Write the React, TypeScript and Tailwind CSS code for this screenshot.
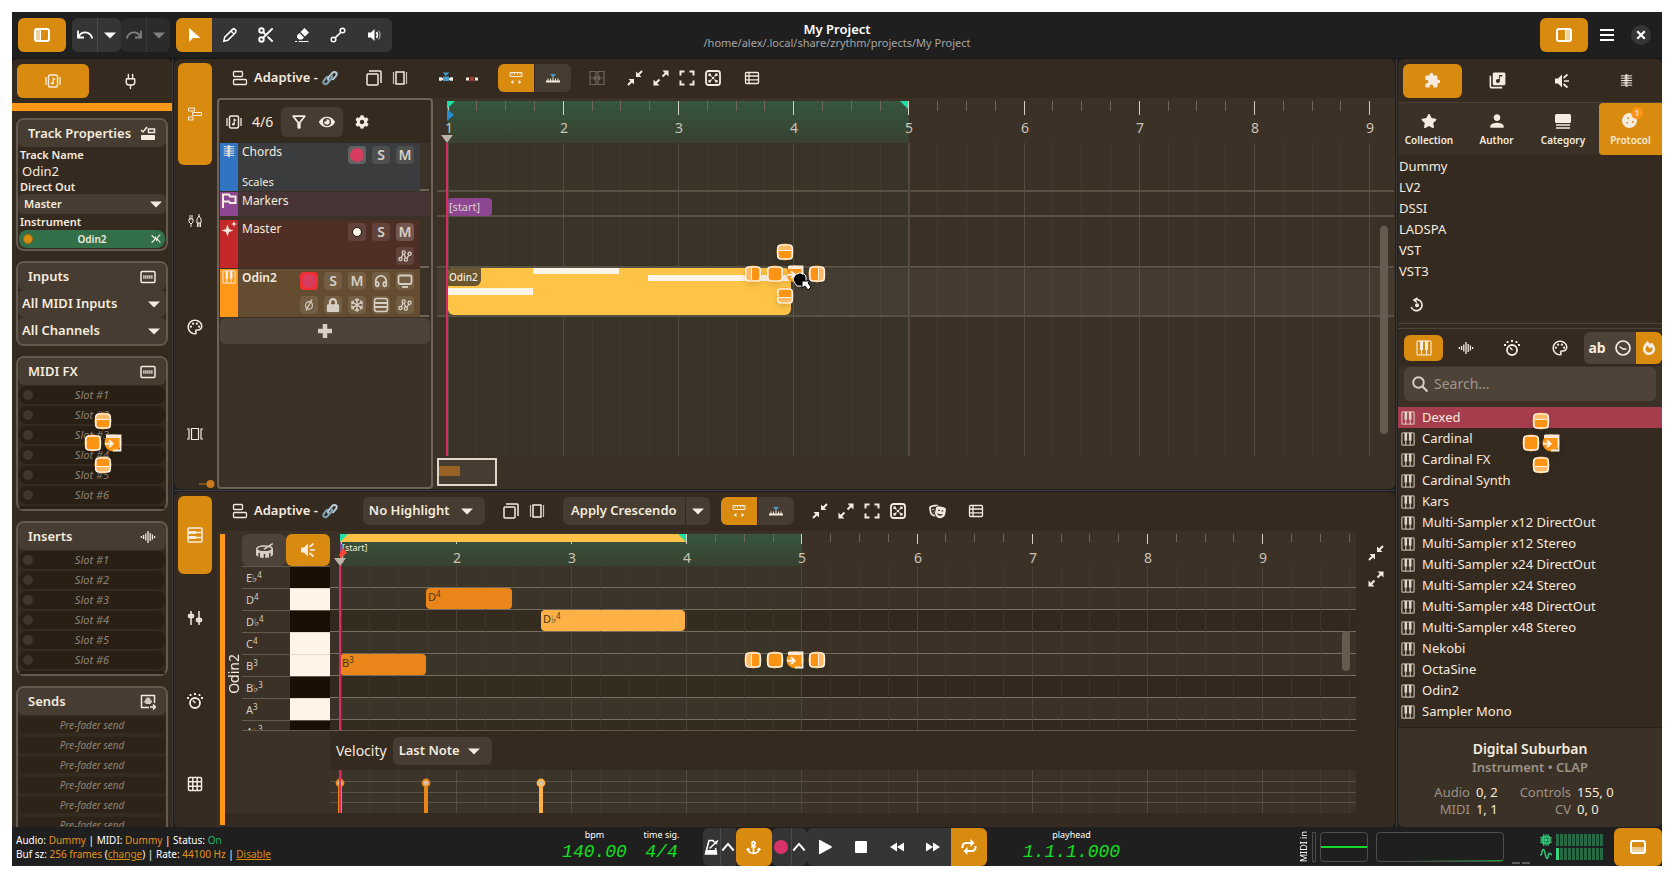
import React from "react";
import {
  FaAnchor, FaLock, FaRegSnowflake, FaTheaterMasks, FaDrum, FaCookie, FaFireAlt, FaStar, FaCog, FaEye,
} from "react-icons/fa";
import { MdLibraryMusic, MdOutlinePalette, MdOutlineFilterAlt, MdPerson, MdExtension } from "react-icons/md";
import { Headphones, Scissors, Plug } from "lucide-react";

type P = { className?: string; size?: number };

const S = ({ size = 16, className = "", children }: P & { children: React.ReactNode }) => (
  <svg width={size} height={size} viewBox="0 0 16 16" fill="none" stroke="currentColor" strokeWidth="1.5" className={"shrink-0 " + className} aria-hidden="true">
    {children}
  </svg>
);

const PanelLeft = () => (
  <S><rect x="1" y="2" width="14" height="12" rx="2" strokeWidth="2" /><path d="M2 3h4v10H2z" fill="currentColor" fillOpacity=".6" stroke="none" /><path d="M6.5 2v12" strokeWidth="1" /></S>
);
const PanelRight = () => (
  <S><rect x="1" y="2" width="14" height="12" rx="2" strokeWidth="2" /><path d="M10 3h4v10h-4z" fill="currentColor" fillOpacity=".6" stroke="none" /><path d="M9.5 2v12" strokeWidth="1" /></S>
);
const PanelBottom = () => (
  <S><rect x="1" y="2" width="14" height="12" rx="2" strokeWidth="2" /><path d="M2 10h12v3H2z" fill="currentColor" fillOpacity=".6" stroke="none" /><path d="M1 9h14" strokeWidth="1" /></S>
);
const Undo = () => <S><path d="M1 3.5v7h6M1.5 10C4 4 13 3 15.300 11.500" strokeWidth="1.800" /></S>;
const Redo = () => <S><path d="M15 3.500v7H9M14.500 10C12 4 3 3 .700 11.500" strokeWidth="1.800" /></S>;
const Down = ({ className }: P) => <S size={12} className={className}><path d="M0 4.500h16l-8 8z" fill="currentColor" stroke="none" /></S>;
const Up = () => <S size={14}><path d="M1.500 12 8 4.500 14.500 12" strokeWidth="2.200" /></S>;
const Pointer = () => <S><path d="M3 1v14l4-4h7.500z" fill="currentColor" stroke="none" /></S>;
const Pencil = () => <S><path d="M1.800 14.200l.9-4L10.500 2.400c1.800-1.500 4.600 1 3.100 3.100L5.800 13.300zM9 4l3 3" /></S>;
const Eraser = () => <S><path d="M10.500 1 15 5.500 11 9.500 6.500 5zM5.500 6 10 10.500 8 12.500H5L3 10.500V8.500z" fill="currentColor" stroke="none" /><path d="M1 14.500h2M4.500 14.500h10" strokeWidth="1.200" /></S>;
const Ramp = () => <S><circle cx="3.500" cy="12.500" r="2.300" /><circle cx="12.500" cy="3.500" r="2.300" /><path d="M5 11.500C7 8 9 8 11 5" /></S>;
const Audition = () => <S><path d="M2 5.500h3L8.500 2v12L5 10.500H2z" fill="currentColor" stroke="none" /><path d="M10.500 5c1.300 2 1.300 4 0 6" /><path d="M12.500 3.500c2 3 2 6 0 9" strokeWidth="1" opacity=".7" /></S>;
const Listen = () => <S><path d="M1 5.500h3L8 1.500v13L4 10.500H1z" fill="currentColor" stroke="none" /><path d="M10 8h5M9.500 5l4-3.500M9.500 11l4 3.500" strokeWidth="1.700" /></S>;
const TrackIcon = () => <S><rect x="3.500" y="2" width="9" height="12" rx="1.500" /><path d="M1 4v8M15 4v8" strokeWidth="1.300" /><path d="M8.200 10.500V5.200l2 1.200" strokeWidth="1.200" /><circle cx="7.300" cy="10.300" r="1.200" fill="currentColor" stroke="none" /></S>;
const CheckBoxes = () => <S><path d="M1 4l2 2 4-5" /><rect x="8.500" y="3" width="6" height="3.500" /><rect x="1" y="9" width="14" height="5" rx="1" fill="currentColor" stroke="none" /></S>;
const MidiIcon = () => <S><rect x="1" y="2.500" width="14" height="11" rx="1.200" /><path d="M3 8h10" strokeWidth="3.500" opacity=".7" strokeDasharray="1.700 .3" /></S>;
const Wave = () => <S><path d="M1.400 7v2M3.600 6v4M5.800 4.500v7M8 2v12M10.200 4v8M12.400 5.500v5M14.600 7v2" strokeWidth="1.300" /></S>;
const SendIcon = () => <S><path d="M9 13.500H1.500v-12h13V9" /><path d="M3.500 7.500h1v-1h1v-2h1v-1h3v1h1v2h1.500v2H11v1.500H5.500V8.500h-2z" fill="currentColor" stroke="none" opacity=".8" /><path d="M10 13h5m-2-2.500 2.500 2.500-2.500 2.500" /></S>;
const Piano = ({ size, className }: P) => (
  <S size={size} className={className}><rect x="1" y="1" width="14" height="14" rx="1" strokeOpacity=".75" /><path d="M5.500 10v5M10.500 10v5" strokeWidth="1.200" /><path d="M5.500 1v9M10.500 1v9" strokeWidth="3" /></S>
);
const PianoRoll = () => <S><rect x="1" y="1" width="14" height="14" rx="1" /><path d="M1 5.500h14M1 10.500h14" /><path d="M2 5.500h7M2 10.500h7" strokeWidth="3" /></S>;
const ChordIcon = ({ size }: P) => <S size={size}><path d="M2 3h12M2 5.500h12M2 8h12M2 10.500h12M2 13h12" strokeWidth="1" /><path d="M8 1v14M6 4.500h4.500M5.500 8h5M6 11.500h4" strokeWidth="2" strokeDasharray="3 1" opacity=".85" /></S>;
const Steps = () => <S><path d="M1.500 2h6v3h-6zM5.500 6.500h9v3h-9zM1.500 11h4.500v3H1.500z" strokeWidth="1" /></S>;
const Cables = () => <S><path d="M2 6h4v3L4 11 2 9zM4 11v3M3 2v4M5 2v4M10 10h4V6l-2-3-2 3zM12 1v3M12 10v4M10.500 14V10M13.500 14V10" strokeWidth="1" /></S>;
const Events = () => <S><path d="M4.500 2.500h7v11h-7zM0 3h2v10H0M16 3h-2v10h2" strokeWidth="1.200" /></S>;
const Faders = () => <S><path d="M4 1v14M12 1v14" /><rect x="1.500" y="4.500" width="5" height="3" rx="1.200" fill="currentColor" fillOpacity=".6" /><rect x="9.500" y="8.500" width="5" height="3" rx="1.200" fill="currentColor" fillOpacity=".6" /></S>;
const Knob = () => <S><circle cx="8" cy="10" r="5" strokeWidth="1.800" /><path d="M5.800 7.500 8.500 10" /><path d="M3.500 1v2M7 1h2M12.500 1v2M0 5h2M14 5h2" strokeWidth="1.800" /></S>;
const GridIcon = () => <S><rect x="1.500" y="1.500" width="13" height="13" rx="1" /><path d="M5.800 1.500v13M10.200 1.500v13M1.500 5.800h13M1.500 10.200h13" /></S>;
const Snap = () => <S><rect x="1.500" y="1.500" width="9" height="5" rx="1" strokeWidth="1.300" /><rect x="1.500" y="9.500" width="13" height="5" rx="1" strokeWidth="1.300" /></S>;
const Duplicate = () => <S><rect x="1" y="4" width="11" height="11" rx="1" /><path d="M3 1h11a1 1 0 0 1 1 1v11" /></S>;
const Overlap = () => <S><rect x="4" y="2" width="8" height="12" /><path d="M1.500 2v12M14.500 2v12" strokeWidth="1.200" opacity=".8" /></S>;
const LinkIcon = () => (
  <svg width="16" height="16" viewBox="0 0 16 16" fill="none" strokeLinecap="round" strokeWidth="2" aria-hidden="true">
    <path d="M7 10.500c-1.400-.4-1.400-2-.5-3l4-4.700c1-1 2.600-1.200 3.500-.3s.9 2.200 0 3.300L11 9.300" stroke="#b9cfd8" />
    <path d="M9 5.500c1.300.5 1.300 2 .4 3l-4 4.800c-1 1-2.600 1.200-3.400.3s-.9-2.200 0-3.300L5 6.700" stroke="#7fa5b5" />
  </svg>
);
const Merge = () => <S><path d="M1 9h3M12 9h3" strokeWidth="3.500" /><path d="M4 9h8" strokeWidth="2" /><rect x="5" y="6.500" width="6" height="4.500" fill="#4c9cc9" stroke="none" /><path d="M4.500 2.500h7L8 6z" fill="#4c9cc9" stroke="none" /></S>;
const Cut = () => <S><path d="M2 9h3M11 9h3" strokeWidth="3" /><path d="M6 7l4 4M10 7l-4 4" stroke="#c8403c" strokeWidth="1.500" /></S>;
const RulerIcon = () => <S><path d="M2 6.500V2.500h12v4z" strokeWidth="1" /><path d="M4 2.500v2M6.500 2.500v2M9.500 2.500v2M12 2.500v2" strokeWidth="1" /><path d="M5.500 10v4L2.500 12zM10.500 10v4l3-2z" fill="currentColor" stroke="none" /></S>;
const SnapRuler = () => <S><path d="M5 4h6L8 7.500z" fill="#4c9cc9" stroke="none" /><path d="M1 11.500h14" strokeWidth="2" /><path d="M3 8.500V11M5.500 8.500V11M8 7.500V11M10.500 8.500V11M13 8.500V11" strokeWidth="1" /></S>;
const BounceIcon = () => <S><path d="M1 1.500h6v13H1zM9 1.500h6v13H9z" strokeWidth="1.200" /><path d="M2 8h5M9 8h5M5 6l2 2-2 2M11 6L9 8l2 2" strokeWidth="1.200" /></S>;
const ZoomOut = () => <S><path d="M9 1.500v5.500h5.500zM1.500 9H7v5.500z" fill="currentColor" stroke="none" /><path d="M10 6l5-5M6 10l-5 5" strokeWidth="2" /></S>;
const ZoomIn = () => <S><path d="M9.500.5h6v6zM.5 9.500v6h6z" fill="currentColor" stroke="none" /><path d="M9.500 6.500l4-4M6.500 9.500l-4 4" strokeWidth="2" /></S>;
const Fit = () => <S><path d="M1.500 5.500V1.500h4M10.500 1.500h4v4M14.500 10.500v4h-4M5.500 14.500h-4v-4" strokeWidth="2" /></S>;
const FitBox = () => <S><rect x="1" y="1" width="14" height="14" rx="2.500" strokeWidth="1.800" /><path d="M4 4l2.500 2.500M12 4 9.500 6.500M4 12l2.500-2.500M12 12 9.500 9.500M4 6V4h2M10 4h2v2M12 10v2h-2M6 12H4v-2" strokeWidth="1.200" /><circle cx="8" cy="8" r="1.300" fill="currentColor" stroke="none" /></S>;
const TableIcon = () => <S><rect x="1.500" y="2.500" width="13" height="11" rx="1" strokeWidth="1.300" /><path d="M5 2.500v11M1.500 6h13M1.500 9.800h13" strokeWidth="1.300" /></S>;
const Flag = () => <S><path d="M2 15V1.500h6l1 2h5.500V10H9L8 8.500H2" strokeWidth="2" /></S>;
const Sparkle = () => <S><path d="M6.500 3.500 8 8l4.500 1.500L8 11l-1.500 4.500L5 11 .5 9.500 5 8zM13 0l.8 2.200L16 3l-2.200.8L13 6l-.8-2.200L10 3l2.200-.8z" fill="currentColor" stroke="none" /></S>;
const Curve = () => <S size={14}><circle cx="2.800" cy="11.500" r="1.800" /><circle cx="6.500" cy="4" r="1.800" /><circle cx="9" cy="12" r="1.800" /><circle cx="13.200" cy="5.500" r="1.800" /><path d="M3.800 10 5.800 5.800M7 6l1.600 4.300M10.200 10.500 12.300 7.200" /></S>;
const Monitor = () => <S><rect x="1.500" y="2.500" width="13" height="8.500" rx="1.500" strokeWidth="1.800" /><path d="M5 14h6" strokeWidth="1.800" /></S>;
const Phase = () => <S size={12}><ellipse cx="8" cy="8.500" rx="4.500" ry="5" strokeWidth="1.500" /><path d="M4 15.500 12 .5" strokeWidth="1.500" /></S>;
const Lanes = () => <S><rect x="1.500" y="1.500" width="13" height="13" rx="2.500" /><path d="M1.500 6h13M1.500 10h13" strokeWidth="1.800" /></S>;
const Plus = () => <S><path d="M8 1v14M1 8h14" strokeWidth="4.500" /></S>;
const Category = () => <S><rect x="0" y="1" width="16" height="9" rx="1.500" fill="currentColor" stroke="none" /><path d="M1 12h14M1 15h14" strokeWidth="1.300" /></S>;
const Reset = () => <S><path d="M5 3a5.600 5.600 0 1 1-2.800 7M8.500 1 5 3l3 2.500" strokeWidth="1.600" /><circle cx="8" cy="8.300" r="2" fill="currentColor" stroke="none" /></S>;
const Clock = () => <S><circle cx="8" cy="8" r="7" strokeWidth="1.700" /><path d="M4.500 6.500 8 9h3.500" /></S>;
const Search = () => <S><circle cx="6.500" cy="6.500" r="5.300" strokeWidth="1.900" /><path d="M10.500 10.500l5 5" strokeWidth="2.200" /></S>;
const Metronome = () => <S><path d="M11 3 10 1.500H6L2.500 15h11L12.500 9" strokeWidth="1.600" /><path d="M3 11h10.500v4H2.500z" fill="currentColor" stroke="none" /><path d="M6.500 9.500 15 1.500M11.500 2.500l2.500 2.500" strokeWidth="1.600" /></S>;
const Loop = () => <S><path d="M1.500 9V7.500a3.500 3.500 0 0 1 3.500-3.500h6M14.500 7v1.500A3.500 3.500 0 0 1 11 12H5" strokeWidth="2" /><path d="M9.500 0v8l4-4zM6.500 8v8l-4-4z" fill="currentColor" stroke="none" /></S>;
const Chip = () => <S size={12}><rect x="3" y="3" width="10" height="10" rx="2" fill="currentColor" /><rect x="5.500" y="5.500" width="5" height="5" stroke="#1d6b43" fill="#3ce08b" /><path d="M5 0v16M8 0v3M11 0v3M8 13v3M11 13v3M0 5h3M0 8h3M0 11h3M13 5h3M13 8h3M13 11h3" strokeWidth="1.300" /></S>;
const Sine = () => <S size={12}><path d="M0 9h1.500C3 9 2 2 4.500 2S7 14 9.500 14 10 7 12.500 7 14 9 16 9" strokeWidth="2" /></S>;
const Unlink = () => <S size={10}><path d="M1 2l5 5M1 14l6-6V4M15 1 9 7v4l1-3 5 6" strokeWidth="1.800" /></S>;

type Kind = "plain" | "left" | "right" | "top" | "bottom" | "into";

const DropTarget = ({ kind, x, y }: { kind: Kind; x: number; y: number }) => (
  <svg width="18" height="18" viewBox="0 0 18 18" className="pointer-events-none absolute z-10 drop-shadow-md" style={{ left: x - 9, top: y - 9 }} aria-hidden="true">
    <circle cx="9" cy="9" r="8.500" fill="#fb9414" />
    {kind === "into" ? (
      <>
        <path d="M3 1.500h13.500v15H9" fill="none" stroke="#fff1e2" strokeWidth="1.800" />
        <path d="M2 1h15v3H2z" fill="#ffe9d6" />
        <path d="M1 9.800h7M5 6.300l3.700 3.500L5 13.300" fill="none" stroke="#fff1e2" strokeWidth="2" />
      </>
    ) : (
      <>
        <rect x="1.800" y="2" width="14.400" height="14" rx="3" fill="#fb9414" stroke="#fff1e2" strokeWidth="1.700" />
        {kind === "left" && <path d="M3 3h4v12H3z" fill="#fff" fillOpacity=".35" />}
        {kind === "left" && <path d="M7.500 3v12" stroke="#fff1e2" />}
        {kind === "right" && <path d="M11 3h4v12h-4z" fill="#fff" fillOpacity=".35" />}
        {kind === "right" && <path d="M10.500 3v12" stroke="#fff1e2" />}
        {kind === "top" && <path d="M3 3h12v4H3z" fill="#fff" fillOpacity=".35" />}
        {kind === "top" && <path d="M3 7.500h12" stroke="#fff1e2" />}
        {kind === "bottom" && <path d="M3 11h12v4H3z" fill="#fff" fillOpacity=".35" />}
        {kind === "bottom" && <path d="M3 10.500h12" stroke="#fff1e2" />}
      </>
    )}
  </svg>
);

const Btn = ({ label, className = "", children }: { label: string; className?: string; children: React.ReactNode }) => (
  <button type="button" aria-label={label} className={"flex shrink-0 items-center justify-center " + className}>{children}</button>
);

const Drop = ({ label, options, className = "", arrow = "right-1" }: { label: string; options: string[]; className?: string; arrow?: string }) => (
  <div className={"relative flex items-center rounded-md bg-[#463c31] " + className}>
    <select aria-label={label} className="h-full w-full appearance-none bg-transparent font-semibold outline-none">
      {options.map((o) => <option key={o}>{o}</option>)}
    </select>
    <Down className={"pointer-events-none absolute " + arrow} />
  </div>
);

const Header = () => (
  <header className="flex h-[47px] shrink-0 items-center border-b border-[#151515] bg-[#1f1f1f] px-1.5">
    <div className="flex flex-1 items-center gap-1.5 text-white">
      <Btn label="Toggle left panel" className="h-[34px] w-12 rounded-md bg-[#d88b0f]"><PanelLeft /></Btn>
      <div className="flex">
        <Btn label="Undo" className="h-[34px] w-[25px] rounded-l-md bg-[#353535]"><Undo /></Btn>
        <Btn label="Undo history" className="h-[34px] w-6 rounded-r-md border-l border-[#4a4a4a] bg-[#353535]"><Down /></Btn>
        <Btn label="Redo" className="h-[34px] w-[25px] rounded-l-md bg-[#2b2b2b] text-[#808080]"><Redo /></Btn>
        <Btn label="Redo history" className="h-[34px] w-6 rounded-r-md border-l border-[#3a3a3a] bg-[#2b2b2b] text-[#808080]"><Down /></Btn>
      </div>
      <div className="flex overflow-hidden rounded-md bg-[#353535]">
        <Btn label="Select" className="h-[34px] w-9 bg-[#d88b0f]"><Pointer /></Btn>
        <Btn label="Edit" className="h-[34px] w-9"><Pencil /></Btn>
        <Btn label="Cut" className="h-[34px] w-9"><Scissors size={18} strokeWidth={2.500} /></Btn>
        <Btn label="Erase" className="h-[34px] w-9"><Eraser /></Btn>
        <Btn label="Ramp" className="h-[34px] w-9"><Ramp /></Btn>
        <Btn label="Audition" className="h-[34px] w-9"><Audition /></Btn>
      </div>
    </div>
    <div className="flex flex-col items-center">
      <h1 className="text-[13px] leading-4 font-semibold text-white">My Project</h1>
      <p className="text-[11px] leading-3 text-[#a5a5a5]">/home/alex/.local/share/zrythm/projects/My Project</p>
    </div>
    <div className="flex flex-1 items-center justify-end text-white">
      <Btn label="Toggle right panel" className="h-[34px] w-12 rounded-md bg-[#d88b0f]"><PanelRight /></Btn>
      <Btn label="Menu" className="h-[34px] w-[38px]"><S><path d="M1 3h14M1 8h14M1 13h14" strokeWidth="2" /></S></Btn>
      <Btn label="Close" className="mr-[5px] ml-[5px] h-5 w-5 rounded-full bg-[#363636]"><S size={12}><path d="M3 3l10 10M13 3 3 13" strokeWidth="3" /></S></Btn>
    </div>
  </header>
);

const Box = ({ title, icon, className = "", children }: { title: string; icon: React.ReactNode; className?: string; children: React.ReactNode }) => (
  <section className={"relative shrink-0 rounded-lg border-2 border-[#645a4e] " + className}>
    <h2 className="flex h-[27px] items-center justify-between rounded-md bg-[#463c31] pr-2.5 pl-2.5 text-[13px] font-semibold">{title}{icon}</h2>
    {children}
  </section>
);

const slots = [1, 2, 3, 4, 5, 6];

const SlotList = () => (
  <ul className="flex flex-col gap-0.5 px-px pt-px">
    {slots.map((n) => (
      <li key={n}>
        <button type="button" className="flex h-[18px] w-full items-center rounded-lg bg-[#2a1f14] pr-3.5 pl-1 text-[11px] text-[#8d8273] italic">
          <span className="h-2.5 w-2.5 rounded-full bg-[#40362b]" />
          <span className="flex-1 text-center">Slot #{n}</span>
        </button>
      </li>
    ))}
    <li className="h-[3px] rounded-t-lg bg-[#2a1f14]" />
  </ul>
);

const Inspector = () => (
  <aside className="flex w-40 shrink-0 flex-col overflow-hidden rounded-t-md bg-[#352a1f]">
    <div className="flex h-11 shrink-0 items-center pl-[5px]">
      <Btn label="Track" className="h-[34px] w-[72px] rounded-md bg-[#d88b0f]"><TrackIcon /></Btn>
      <Btn label="Plugin" className="h-[34px] flex-1"><Plug size={17} strokeWidth={2} /></Btn>
    </div>
    <div className="h-2 shrink-0 bg-[#ff9718]" />
    <div className="mt-[7px] flex min-h-0 flex-1 flex-col gap-2.5 overflow-hidden px-1">
      <Box title="Track Properties" icon={<CheckBoxes />}>
        <div className="flex flex-col pb-px text-[11px] leading-4 font-semibold">
          <span className="px-0.5">Track Name</span>
          <span className="px-1 text-[13px] leading-4 font-normal">Odin2</span>
          <span className="px-0.5 leading-[15px]">Direct Out</span>
          <Drop label="Direct Out" options={["Master"]} className="h-5 pl-1.5 text-[11px]" />
          <span className="px-0.5">Instrument</span>
          <button type="button" className="mx-px flex h-[18px] items-center rounded-lg bg-[#33704a] px-1 text-[10px]">
            <span className="h-2.5 w-2.5 rounded-full border border-[#a86b10] bg-[#d88b0f]" />
            <span className="flex-1 text-center">Odin2</span>
            <Unlink />
          </button>
        </div>
      </Box>
      <Box title="Inputs" icon={<MidiIcon />}>
        <Drop label="MIDI inputs" options={["All MIDI Inputs"]} className="h-[27px] pl-1 text-[13px]" arrow="right-1.5" />
        <Drop label="MIDI channels" options={["All Channels"]} className="h-[27px] pl-1 text-[13px]" arrow="right-1.5" />
      </Box>
      <Box title="MIDI FX" icon={<MidiIcon />}>
        <SlotList />
        <DropTarget kind="top" x={85} y={63} />
        <DropTarget kind="plain" x={75} y={85} />
        <DropTarget kind="into" x={95} y={85} />
        <DropTarget kind="bottom" x={85} y={107} />
      </Box>
      <Box title="Inserts" icon={<Wave />}><SlotList /></Box>
      <Box title="Sends" icon={<SendIcon />} className="h-44 overflow-hidden">
        <ul className="flex flex-col gap-1 px-px pt-0.5">
          {slots.map((n) => (
            <li key={n} className="flex"><button type="button" className="block h-4 w-full bg-[#2e2318] text-center text-[10px] leading-4 text-[#8d8273] italic">Pre-fader send</button></li>
          ))}
        </ul>
      </Box>
    </div>
  </aside>
);

const Rail = ({ items }: { items: { label: string; icon: React.ReactNode }[] }) => (
  <nav className="flex w-[38px] shrink-0 flex-col gap-[5px] py-1 pl-1">
    {items.map((it, i) => (
      <Btn key={it.label} label={it.label} className={"w-[34px] flex-1 rounded-md " + (i === 0 ? "bg-[#d88b0f]" : "")}>{it.icon}</Btn>
    ))}
  </nav>
);

const Adaptive = () => (
  <button type="button" className="flex items-center gap-1 text-[13px] font-semibold">
    <Snap /><span className="ml-0.5">Adaptive -</span><LinkIcon />
  </button>
);

const SnapToggle = () => (
  <div className="flex">
    <Btn label="Snap to grid" className="h-7 w-9 rounded-l-md bg-[#d88b0f]"><RulerIcon /></Btn>
    <Btn label="Snap to events" className="ml-px h-7 w-9 rounded-r-md bg-[#463c31]"><SnapRuler /></Btn>
  </div>
);

const ZoomButtons = () => (
  <div className="flex gap-2.5">
    <Btn label="Zoom out"><ZoomOut /></Btn>
    <Btn label="Zoom in"><ZoomIn /></Btn>
    <Btn label="Original size"><Fit /></Btn>
    <Btn label="Best fit"><FitBox /></Btn>
  </div>
);

const TBtn = ({ label, tone = "bg-white/10", children }: { label: string; tone?: string; children: React.ReactNode }) => (
  <Btn label={label} className={"h-[18px] w-[18px] rounded-sm text-sm font-semibold text-[#d8cfc4] " + tone}>{children}</Btn>
);

const Track = ({ color, body, name, icon, sub, bold, tall = true, meter = true, children }: {
  color: string; body: string; name: string; icon: React.ReactNode; sub?: string; bold?: boolean; tall?: boolean; meter?: boolean; children?: React.ReactNode;
}) => (
  <li className={"flex shrink-0 " + (tall ? "h-12" : "h-6")}>
    <div className={"flex w-[18px] shrink-0 justify-center pt-px " + color}>{icon}</div>
    <div className={"flex min-w-0 flex-1 justify-between pl-1 " + body}>
      <div className="flex flex-col justify-between pb-px">
        <span className={"text-xs leading-[18px] " + (bold ? "font-semibold" : "")}>{name}</span>
        {sub && <span className="text-[11px] leading-4">{sub}</span>}
      </div>
      <div className="flex flex-col items-end gap-1.5 pt-[3px] pr-1.5">{children}</div>
    </div>
    {meter && <div className="mr-px flex w-[9px] shrink-0 items-end border-b-2 border-dashed border-[#6d6357]" />}
  </li>
);

const BAR = 115.200;
const BEAT = BAR / 4;

const Ruler = ({ origin, small }: { origin: number; small?: boolean }) => (
  <>
    {Array.from({ length: 36 }, (_, i) => {
      const x = Math.round(origin + i * BEAT);
      const major = i % 4 === 0;
      return (
        <React.Fragment key={i}>
          <div className={"absolute top-0 w-px " + (major ? (small ? "h-2.5 bg-[#d8cfc4]" : "h-3.5 bg-[#d8cfc4]") : (small ? "h-2 bg-[#6e675a]" : "h-2.5 bg-[#6e675a]"))} style={{ left: x }} />
          {major && <span className={"absolute w-8 text-center text-sm leading-5 text-[#cbc2b6] " + (small ? "top-3.5" : "top-[17px]")} style={{ left: x - 15 }}>{i / 4 + 1}</span>}
        </React.Fragment>
      );
    })}
  </>
);

const GridLines = ({ origin }: { origin: number }) => (
  <>
    {Array.from({ length: 36 }, (_, i) => (
      <div key={i} className={"absolute top-0 bottom-0 w-px " + (i % 4 === 0 ? "bg-[#554c3f]" : "bg-[#443b2f]")} style={{ left: Math.round(origin + i * BEAT) }} />
    ))}
  </>
);

const Playhead = () => (
  <svg width="12" height="8" viewBox="0 0 12 8" className="block" aria-hidden="true"><path d="M0 0h12L6 8z" fill="#bcb3a6" /></svg>
);
const Corner = ({ flip, className = "" }: { flip?: boolean; className?: string }) => (
  <svg width="8" height="8" viewBox="0 0 8 8" className={"absolute top-0 " + className} aria-hidden="true"><path d={flip ? "M0 0h8v8z" : "M0 0h8L0 8z"} fill="#1fe0a5" /></svg>
);

const Timeline = () => (
  <div className="flex min-w-0 flex-1 flex-col overflow-hidden pt-[3px] pr-px pl-1">
    <div className="relative h-[42px] shrink-0 overflow-hidden">
      <div className="absolute top-0 left-[11px] h-full w-[461px] bg-linear-to-b from-[#35563f] to-[#37412f]" />
      <Ruler origin={10.500} />
      <Corner className="left-2.5" />
      <Corner flip className="left-[463px]" />
      <svg width="7" height="12" viewBox="0 0 7 12" className="absolute top-2 left-2.5" aria-hidden="true"><path d="M0 0l7 6-7 6z" fill="#2590cf" /></svg>
      <div className="absolute top-[34px] left-1"><Playhead /></div>
    </div>
    <div className="relative min-h-0 flex-1 overflow-hidden">
      <div className="absolute top-0 bottom-0 left-[11px] w-[461px] bg-[#3a3327]" />
      <GridLines origin={10.500} />
      <div className="absolute top-[126px] right-0 left-0 h-12 bg-white/5" />
      {[47, 72, 123, 172].map((y) => <div key={y} className="absolute right-0 left-0 h-0.5 bg-[#5a5145]" style={{ top: y }} />)}
      <div className="absolute top-0 bottom-0 left-[472px] w-px bg-[#35533c]" />
      <div className="absolute top-[55px] left-[11px] h-[18px] w-11 rounded-sm bg-[#8d4790] px-px text-[11px] leading-[18px] text-[#dccfc8]">[start]</div>
      <div className="absolute top-[125px] left-[11px] h-[47px] w-[343px] overflow-hidden rounded-md bg-[#ffc445]">
        <div className="absolute top-0 left-[85px] h-1.5 w-[86px] bg-[#fff4e8]" />
        <div className="absolute top-[7px] left-[200px] h-1.5 w-[143px] bg-[#fff4e8]" />
        <div className="absolute top-5 left-0 h-[7px] w-[85px] bg-[#fff4e8]" />
        <span className="absolute top-0 left-0 rounded-br-md bg-[#6c5630] pr-[3px] pl-px text-[10px] leading-[18px] font-medium">Odin2</span>
      </div>
      <div className="absolute top-0 bottom-0 left-[9px] w-0.5 bg-[#d92b62]" />
      <DropTarget kind="top" x={348} y={109} />
      <DropTarget kind="left" x={316} y={131} />
      <DropTarget kind="plain" x={338} y={131} />
      <DropTarget kind="into" x={358} y={131} />
      <DropTarget kind="right" x={380} y={131} />
      <DropTarget kind="bottom" x={348} y={153} />
      <svg width="20" height="20" viewBox="0 0 20 20" className="absolute top-[129px] left-[355px] z-20" aria-hidden="true">
        <path d="M2 5l2-3h2l1-1h2l1 1h2l1 1 1 2v5l-2 4H5L2 10 1 7z" fill="#000" stroke="#fff" />
        <path d="M10 9h8l-2 2 3 4-3 3-3-4-3 2z" fill="#fff" stroke="#000" />
      </svg>
      <div className="absolute top-[83px] right-1.5 bottom-[22px] w-2 rounded-full bg-[#665b4f]" />
    </div>
    <div className="h-[33px] shrink-0 pt-0.5">
      <div className="h-7 w-[60px] border-2 border-[#e0d5c6] bg-[#463c31] pt-1.5"><div className="h-2.5 w-[21px] bg-[#986224]" /></div>
    </div>
  </div>
);

const Arranger = () => (
  <section className="relative flex min-h-0 flex-1 overflow-hidden rounded-md bg-[#352a1f]">
    <Rail items={[{ label: "Timeline", icon: <Steps /> }, { label: "Port connections", icon: <Cables /> }, { label: "Colors", icon: <MdOutlinePalette size={18} /> }, { label: "Events", icon: <Events /> }]} />
    <svg width="16" height="10" viewBox="0 0 16 10" className="absolute bottom-0 left-[25px]" aria-hidden="true"><path d="M0 5h9" stroke="#c97c1c" /><circle cx="11.500" cy="5" r="4" fill="#c97c1c" /></svg>
    <div className="ml-[5px] flex min-w-0 flex-1 flex-col">
      <div className="flex h-[39px] shrink-0 items-center pb-px pl-[15px]">
        <Adaptive />
        <div className="ml-7 flex gap-2.5"><Btn label="Duplicate"><Duplicate /></Btn><Btn label="Nudge"><Overlap /></Btn></div>
        <div className="mr-[18px] ml-[30px] flex gap-2.5"><Btn label="Merge"><Merge /></Btn><Btn label="Split"><Cut /></Btn></div>
        <SnapToggle />
        <div className="mr-[22px] ml-[18px] text-[#6f665a]"><Btn label="Bounce"><BounceIcon /></Btn></div>
        <ZoomButtons />
        <Btn label="Event list" className="ml-[23px]"><TableIcon /></Btn>
      </div>
      <div className="flex min-h-0 flex-1 bg-[#3b3126]">
        <div className="flex w-[216px] shrink-0 flex-col rounded border-2 border-[#6d6357] px-px">
          <div className="flex h-[43px] shrink-0 items-center bg-[#352a1f] pl-1.5">
            <TrackIcon />
            <span className="ml-2.5 text-sm">4/6</span>
            <div className="ml-2 flex h-[30px] items-center gap-2.5 rounded-md bg-[#463c31] px-2">
              <Btn label="Filter tracks"><MdOutlineFilterAlt size={20} /></Btn>
              <Btn label="Visibility"><FaEye size={16} /></Btn>
            </div>
            <Btn label="Tracklist settings" className="ml-3"><FaCog size={14} /></Btn>
          </div>
          <ul className="flex flex-col gap-px">
            <Track color="bg-[#3274c4]" body="bg-[#3a3c3d]" name="Chords" sub="Scales" icon={<ChordIcon size={14} />}>
              <div className="flex gap-1.5">
                <TBtn label="Record" tone="bg-white/20"><span className="h-3.5 w-3.5 rounded-full bg-[#d83c5e]" /></TBtn>
                <TBtn label="Solo">S</TBtn><TBtn label="Mute">M</TBtn>
              </div>
            </Track>
            <Track color="bg-[#8d4790]" body="bg-[#473436]" name="Markers" tall={false} meter={false} icon={<Flag />} />
            <li className="h-0.5" />
            <Track color="bg-[#c52828]" body="bg-[#4f2e25]" name="Master" icon={<Sparkle />}>
              <div className="flex gap-1.5">
                <TBtn label="Mono"><span className="h-2.5 w-2.5 rounded-full border border-[#1b0f08] bg-[#fff4e8]" /></TBtn>
                <TBtn label="Solo">S</TBtn><TBtn label="Mute" tone="bg-white/20">M</TBtn>
              </div>
              <TBtn label="Automation"><Curve /></TBtn>
            </Track>
            <Track color="bg-[#ff9718]" body="bg-[#634c2f]" name="Odin2" bold icon={<Piano size={14} />}>
              <div className="flex gap-1.5">
                <TBtn label="Record" tone="bg-[#f03030]"><span className="h-3.5 w-3.5 rounded-full bg-[#d83c5e]" /></TBtn>
                <TBtn label="Solo">S</TBtn><TBtn label="Mute">M</TBtn>
                <TBtn label="Listen"><Headphones size={14} strokeWidth={3} /></TBtn>
                <TBtn label="Monitor"><Monitor /></TBtn>
              </div>
              <div className="flex gap-1.5">
                <TBtn label="Phase"><Phase /></TBtn>
                <TBtn label="Lock"><FaLock size={14} /></TBtn>
                <TBtn label="Freeze"><FaRegSnowflake size={14} /></TBtn>
                <TBtn label="Lanes"><Lanes /></TBtn>
                <TBtn label="Automation"><Curve /></TBtn>
              </div>
            </Track>
          </ul>
          <Btn label="Add track" className="mt-px h-[26px] rounded-md bg-[#4d4338] text-[#d8cfc4]"><Plus /></Btn>
        </div>
        <Timeline />
      </div>
    </div>
  </section>
);

const keys = [
  { n: "E♭", o: 4, black: true, shade: false }, { n: "D", o: 4, black: false, shade: false }, { n: "D♭", o: 4, black: true, shade: true },
  { n: "C", o: 4, black: false, shade: false }, { n: "B", o: 3, black: false, shade: false }, { n: "B♭", o: 3, black: true, shade: true },
  { n: "A", o: 3, black: false, shade: false }, { n: "A♭", o: 3, black: true, shade: true },
];

const Note = ({ n, o, x, y, w, c }: { n: string; o: number; x: number; y: number; w: number; c: string }) => (
  <div className={"absolute h-[21px] rounded-sm px-0.5 text-[11px] leading-[18px] text-[#4a3823] " + c} style={{ left: x, top: y, width: w }}>
    {n}<sup className="text-[8px]">{o}</sup>
  </div>
);

const velocities = [{ x: 10, c: "#e98519" }, { x: 96, c: "#e98519" }, { x: 211, c: "#ffb146" }];

const PianoRollView = () => (
  <div className="flex min-h-0 flex-1 bg-[#3b3126] pt-[3px] pl-[3px]">
    <div className="mb-0.5 w-[5px] shrink-0 bg-[#ff9718]" />
    <div className="flex min-w-0 flex-1 flex-col">
      <div className="flex min-h-0 flex-1">
        <div className="flex w-[17px] shrink-0 items-center justify-center"><span className="rotate-180 text-sm leading-4 [writing-mode:vertical-rl]">Odin2</span></div>
        <div className="flex w-[88px] shrink-0 flex-col">
          <div className="flex h-8 shrink-0">
            <Btn label="Drum notation" className="w-11 rounded-md bg-[#4d4338] text-[#d8cfc4]"><FaDrum size={17} /></Btn>
            <Btn label="Listen notes" className="w-11 rounded-md bg-[#d88b0f]"><Listen /></Btn>
          </div>
          <ul className="min-h-0 flex-1 overflow-hidden border-b border-[#645a4e]">
            {keys.map((k) => (
              <li key={k.n + k.o} className="flex h-[22px] border-t border-[#645a4e]">
                <span className="w-12 pl-1 text-[11px] leading-[22px] text-[#d8cfc4]">{k.n}<sup className="text-[8px]">{k.o}</sup></span>
                <span className={"flex-1 " + (k.black ? "bg-[#1a0f04]" : "-mt-px border-t border-[#e6dacb] bg-[#fff4e8]")} />
              </li>
            ))}
          </ul>
          <div className="h-[82px] shrink-0" />
        </div>
        <div className="flex min-w-0 flex-1 flex-col">
          <div className="relative h-8 shrink-0 overflow-hidden">
            <div className="absolute top-0 left-2.5 h-full w-[462px] bg-linear-to-b from-[#35563f] to-[#37412f]" />
            <div className="absolute top-0 left-2.5 h-full w-0.5 bg-[#8d4790]" />
            <Ruler origin={10.500} small />
            <div className="absolute top-0 left-2.5 h-2 w-[346px] bg-[#ffc445]" />
            <Corner className="left-2.5" />
            <Corner flip className="left-[348px]" />
            <span className="absolute top-2 left-3 text-[9px] leading-3">[start]</span>
            <svg width="8" height="10" viewBox="0 0 8 10" className="absolute top-3.5 left-2.5" aria-hidden="true"><path d="M0 10V5L3 0l4 5z" fill="#ff4136" /></svg>
            <div className="absolute top-6 left-1"><Playhead /></div>
          </div>
          <div className="relative min-h-0 flex-1 overflow-hidden border-b border-[#645a4e]">
            {keys.map((k) => <div key={k.n + k.o} className={"h-[22px] border-b border-[#7a7063] " + (k.shade ? "bg-[#33281d]" : "")} />)}
            <div className="absolute top-0 bottom-0 left-2.5 w-[461px] bg-[#2f6b3a]/8" />
            <div className="absolute inset-0 opacity-70"><GridLines origin={10.500} /></div>
            <div className="absolute top-0 bottom-0 left-[471px] w-px bg-[#35533c]" />
            <Note n="D" o={4} x={96} y={22} w={86} c="bg-[#e98519]" />
            <Note n="D♭" o={4} x={211} y={44} w={144} c="bg-[#ffb146]" />
            <Note n="B" o={3} x={10} y={88} w={86} c="bg-[#e98519]" />
            <div className="absolute top-0 bottom-0 left-[9px] w-0.5 bg-[#d92b62]" />
            <DropTarget kind="left" x={423} y={94} />
            <DropTarget kind="plain" x={445} y={94} />
            <DropTarget kind="into" x={465} y={94} />
            <DropTarget kind="right" x={487} y={94} />
            <div className="absolute top-[65px] right-1.5 h-10 w-2 rounded-full bg-[#665b4f]" />
          </div>
          <div className="flex h-[39px] shrink-0 items-center gap-1.5 bg-[#352a1f] pl-1.5">
            <span className="text-sm">Velocity</span>
            <Drop label="Velocity mode" options={["Last Note"]} className="h-7 w-[99px] pl-1.5 text-[13px]" arrow="right-3" />
          </div>
          <div className="relative h-[43px] shrink-0 overflow-hidden">
            <div className="absolute top-0 bottom-0 left-2.5 w-[461px] bg-[#2f6b3a]/8" />
            <GridLines origin={10.500} />
            {[11, 22, 32].map((y) => <div key={y} className="absolute right-0 left-0 h-px bg-[#5a5145]" style={{ top: y }} />)}
            <div className="absolute top-0 bottom-0 left-[471px] w-px bg-[#35533c]" />
            {velocities.map((v) => (
              <svg key={v.x} width="10" height="36" viewBox="0 0 10 36" className="absolute top-2" style={{ left: v.x - 5 }} aria-hidden="true">
                <path d="M5 6v30" stroke={v.c} strokeWidth="4" /><circle cx="5" cy="5" r="3.500" fill="#d6c3ab" stroke={v.c} strokeWidth="1.800" />
              </svg>
            ))}
            <div className="absolute top-0 bottom-0 left-[9px] w-0.5 bg-[#d92b62]" />
          </div>
        </div>
      </div>
      <div className="h-3.5 shrink-0 bg-[#352a1f]" />
    </div>
    <div className="-mt-[3px] flex w-[39px] shrink-0 flex-col items-center gap-2.5 bg-[#352a1f] pt-3.5">
      <Btn label="Zoom keys out"><ZoomOut /></Btn>
      <Btn label="Zoom keys in"><ZoomIn /></Btn>
    </div>
  </div>
);

const Editor = () => (
  <section className="flex h-[335px] shrink-0 overflow-hidden rounded-md bg-[#352a1f]">
    <Rail items={[{ label: "Piano roll", icon: <PianoRoll /> }, { label: "Mixer", icon: <Faders /> }, { label: "Modulators", icon: <Knob /> }, { label: "Chord pads", icon: <GridIcon /> }]} />
    <div className="ml-[5px] flex min-w-0 flex-1 flex-col">
      <div className="flex h-[39px] shrink-0 items-center pb-px pl-[15px]">
        <Adaptive />
        <Drop label="Highlighting" options={["No Highlight"]} className="ml-[25px] h-7 w-[122px] pl-1.5 text-[13px]" arrow="right-3" />
        <div className="ml-[18px] flex gap-2.5"><Btn label="Duplicate"><Duplicate /></Btn><Btn label="Nudge"><Overlap /></Btn></div>
        <button type="button" className="ml-[18px] h-7 w-[122px] rounded-l-md bg-[#463c31] text-[13px] font-semibold">Apply Crescendo</button>
        <Btn label="More functions" className="mr-[11px] ml-px h-7 w-6 rounded-r-md bg-[#463c31]"><Down /></Btn>
        <SnapToggle />
        <div className="ml-[18px]"><ZoomButtons /></div>
        <Btn label="Ghost notes" className="ml-[23px]"><FaTheaterMasks size={17} /></Btn>
        <Btn label="Event list" className="ml-[22px]"><TableIcon /></Btn>
      </div>
      <PianoRollView />
    </div>
  </section>
);

const plugins = [
  "Dexed", "Cardinal", "Cardinal FX", "Cardinal Synth", "Kars", "Multi-Sampler x12 DirectOut", "Multi-Sampler x12 Stereo",
  "Multi-Sampler x24 DirectOut", "Multi-Sampler x24 Stereo", "Multi-Sampler x48 DirectOut", "Multi-Sampler x48 Stereo",
  "Nekobi", "OctaSine", "Odin2", "Sampler Mono",
];

const Browser = () => (
  <aside className="flex w-[264px] shrink-0 flex-col overflow-hidden rounded-md bg-[#352a1f]">
    <div className="grid h-[43px] shrink-0 grid-cols-4 items-center gap-1.5 pr-1.5 pl-[5px]">
      <Btn label="Plugins" className="h-[34px] rounded-md bg-[#d88b0f]"><MdExtension size={17} /></Btn>
      <Btn label="Files" className="h-[34px]"><MdLibraryMusic size={19} /></Btn>
      <Btn label="Monitor" className="h-[34px]"><Listen /></Btn>
      <Btn label="Chord presets" className="h-[34px]"><ChordIcon size={15} /></Btn>
    </div>
    <div className="grid h-[53px] shrink-0 grid-cols-[68px_67px_66px_63px] border-t border-[#4a4136] bg-[#3b3126] text-[10px] font-semibold">
      <button type="button" className="flex flex-col items-center gap-1 pt-2.5 pr-1.5"><FaStar size={16} /><span>Collection</span></button>
      <button type="button" className="flex flex-col items-center gap-1 pt-2.5 pr-1.5"><MdPerson size={16} className="scale-125" /><span>Author</span></button>
      <button type="button" className="flex flex-col items-center gap-1 pt-2.5 pr-1.5"><Category /><span>Category</span></button>
      <button type="button" className="relative flex flex-col items-center gap-1 rounded-l-sm bg-[#d88b0f] pt-2.5">
        <FaCookie size={15} className="mr-0.5 mb-px" /><span>Protocol</span>
        <span className="absolute top-1 left-8 h-3 w-3 rounded-full bg-[#fb9414] text-center text-[9px] leading-3">1</span>
      </button>
    </div>
    <ul className="shrink-0 pt-px pl-px text-[13px]">
      {["Dummy", "LV2", "DSSI", "LADSPA", "VST", "VST3"].map((p) => <li key={p} className="h-[21px] leading-[21px]">{p}</li>)}
    </ul>
    <Btn label="Reset filters" className="ml-[11px] h-[41px] w-4 pt-1"><Reset /></Btn>
    <div className="h-1.5 shrink-0 border-y border-[#4d4439]" />
    <div className="flex h-[37px] shrink-0 items-center pl-1.5">
      <Btn label="Instruments" className="h-[26px] w-[39px] rounded-md bg-[#d88b0f]"><Piano size={16} /></Btn>
      <div className="flex flex-1 justify-around">
        <Btn label="Effects"><Wave /></Btn>
        <Btn label="Modulators"><Knob /></Btn>
        <Btn label="MIDI effects"><MdOutlinePalette size={18} /></Btn>
      </div>
      <div className="flex h-8 w-[78px] overflow-hidden rounded-md bg-[#4d4338]">
        <Btn label="Sort by name" className="w-[26px] text-sm font-bold">ab</Btn>
        <Btn label="Sort by last used" className="w-[26px]"><Clock /></Btn>
        <Btn label="Sort by most used" className="w-[26px] bg-[#d88b0f]"><FaFireAlt size={14} /></Btn>
      </div>
    </div>
    <div className="shrink-0 bg-[#3b3126] px-1.5 pt-px pb-1.5">
      <label className="flex h-[34px] items-center gap-1.5 rounded-md bg-[#4d4338] pl-2 text-[#d8cfc4]">
        <Search />
        <input type="text" aria-label="Search plugins" placeholder="Search..." className="w-full min-w-0 bg-transparent text-sm outline-none placeholder:text-[#a0968a]" />
      </label>
    </div>
    <ul className="relative min-h-0 flex-1 text-[13px]">
      {plugins.map((p, i) => (
        <li key={p} className={"flex h-[21px] items-center gap-[7px] pt-px pl-[3px] " + (i === 0 ? "bg-[#a63d4d]" : "")}>
          <Piano size={14} className="text-[#e0d5c6]" /><span>{p}</span>
        </li>
      ))}
      <DropTarget kind="top" x={143} y={14} />
      <DropTarget kind="plain" x={133} y={36} />
      <DropTarget kind="into" x={153} y={36} />
      <DropTarget kind="bottom" x={143} y={58} />
    </ul>
    <div className="flex h-[100px] shrink-0 flex-col items-center border-t border-[#2a2118] bg-[#3b3126] pt-3">
      <h2 className="text-sm leading-[18px] font-semibold">Digital Suburban</h2>
      <p className="text-[13px] leading-[18px] font-semibold text-[#9d9386]">Instrument • CLAP</p>
      <dl className="mt-2 mr-3 grid grid-cols-[auto_auto_auto_auto] gap-x-1.5 text-[13px] leading-[17px]">
        <dt className="text-right text-[#9d9386]">Audio</dt><dd className="mr-4">0, 2</dd>
        <dt className="text-right text-[#9d9386]">Controls</dt><dd>155, 0</dd>
        <dt className="text-right text-[#9d9386]">MIDI</dt><dd>1, 1</dd>
        <dt className="text-right text-[#9d9386]">CV</dt><dd>0, 0</dd>
      </dl>
    </div>
  </aside>
);

const Lcd = ({ label, value, className = "" }: { label: string; value: string; className?: string }) => (
  <div className={"flex h-full flex-col items-center " + className}>
    <span className="text-[9px] leading-[14px] text-white">{label}</span>
    <span className="font-['Liberation_Mono',monospace] text-lg leading-5 text-[#10e020] italic">{value}</span>
  </div>
);

const Meter = ({ level }: { level: number }) => (
  <div className="flex gap-px">
    {Array.from({ length: 12 }, (_, i) => <span key={i} className={"h-3 w-[3px] " + (i < level ? "bg-[#35d67d]" : "bg-[#276844]")} />)}
  </div>
);

const StatusBar = () => (
  <footer className="flex h-[38px] shrink-0 items-center bg-[#1f1f1f] text-white">
    <div className="flex-1 pl-1 text-[10px] leading-[14px]">
      <p>Audio: <span className="text-[#e3921c]">Dummy</span> | MIDI: <span className="text-[#e3921c]">Dummy</span> | Status: <span className="text-[#27b565]">On</span></p>
      <p>Buf sz: <span className="text-[#e3921c]">256 frames</span> (<a href="#buffer" className="text-[#d88b0f] underline">change</a>) | Rate: <span className="text-[#e3921c]">44100 Hz</span> | <a href="#engine" className="text-[#d88b0f] underline">Disable</a></p>
    </div>
    <div className="flex h-full items-center">
      <Lcd label="bpm" value="140.00" className="w-[66px]" />
      <Lcd label="time sig." value="4/4" className="mr-[11px] ml-1 w-[60px]" />
      <div className="flex h-full overflow-hidden rounded-l-md bg-[#353535]">
        <Btn label="Metronome" className="w-[17px]"><Metronome /></Btn>
        <Btn label="Metronome options" className="w-4 border-l border-[#4a4a4a]"><Up /></Btn>
      </div>
      <Btn label="Return to cue" className="h-full w-9 rounded-md bg-[#d88b0f]"><FaAnchor size={15} /></Btn>
      <div className="flex h-full overflow-hidden rounded-md bg-[#353535]">
        <Btn label="Record" className="w-[19px]"><span className="h-3.5 w-3.5 rounded-full bg-[#d83368]" /></Btn>
        <Btn label="Record options" className="w-4 border-l border-[#4a4a4a]"><Up /></Btn>
      </div>
      <div className="flex h-full overflow-hidden rounded-md bg-[#353535]">
        <Btn label="Play" className="w-9"><S><path d="M2 1.500Q2 .5 3 1l11.500 6.300q.8.700 0 1.400L3 15q-1 .5-1-.5z" fill="currentColor" stroke="none" /></S></Btn>
        <Btn label="Stop" className="w-9"><S><rect x="2" y="2" width="12" height="12" rx="1" fill="currentColor" stroke="none" /></S></Btn>
        <Btn label="Backward" className="w-9"><S><path d="M8 3.500v9L1 8zM15 3.500v9L8 8z" fill="currentColor" stroke="none" /></S></Btn>
        <Btn label="Forward" className="w-9"><S><path d="M8 3.500v9l7-4.500zM1 3.500v9l7-4.500z" fill="currentColor" stroke="none" /></S></Btn>
        <Btn label="Loop" className="w-9 bg-[#d88b0f]"><Loop /></Btn>
      </div>
      <Lcd label="playhead" value="1.1.1.000" className="ml-9 w-[98px]" />
    </div>
    <div className="-ml-1 flex h-full flex-1 items-center justify-end">
      <span className="mr-0.5 rotate-180 text-[9px] leading-3 [writing-mode:vertical-rl]">MIDI in</span>
      <div className="mr-1 h-[30px] w-1 border border-[#4a4a4a]" />
      <div className="mr-2 flex h-[30px] w-12 items-center rounded border border-[#4f4f4f]"><div className="h-0.5 w-full bg-[#18d830]" /></div>
      <div className="flex h-[30px] w-32 items-end justify-end rounded border border-[#4f4f4f]"><div className="h-px w-3/4 bg-linear-to-r from-transparent to-[#1c9c30]" /></div>
      <div className="mr-2.5 ml-2 flex gap-0.5 self-end pb-0.5"><span className="h-0.5 w-2 bg-[#5a5a5a]" /><span className="h-0.5 w-2 bg-[#5a5a5a]" /></div>
      <div className="mr-[11px] flex flex-col gap-0.5 text-[#35c878]">
        <div className="flex items-center gap-1"><Chip /><Meter level={0} /></div>
        <div className="flex items-center gap-1"><Sine /><Meter level={1} /></div>
      </div>
      <Btn label="Toggle bottom panel" className="h-full w-12 rounded-md bg-[#d88b0f]"><PanelBottom /></Btn>
    </div>
  </footer>
);

export default function App() {
  return (
    <div className="h-screen min-h-[600px] bg-white p-3 font-['Noto_Sans',sans-serif] text-[#f5ebdf]">
      <div className="flex h-full flex-col overflow-hidden bg-[#1f1f1f]">
        <Header />
        <main className="flex min-h-0 flex-1 pb-px">
          <Inspector />
          <div className="mr-px w-px shrink-0 bg-[#3a3a3c]" />
          <div className="flex min-w-0 flex-1 flex-col">
            <Arranger />
            <div className="my-px h-px shrink-0 bg-[#3c3c42]" />
            <Editor />
          </div>
          <div className="mx-px w-px shrink-0 bg-[#3a3a3c]" />
          <Browser />
        </main>
        <StatusBar />
      </div>
    </div>
  );
}
